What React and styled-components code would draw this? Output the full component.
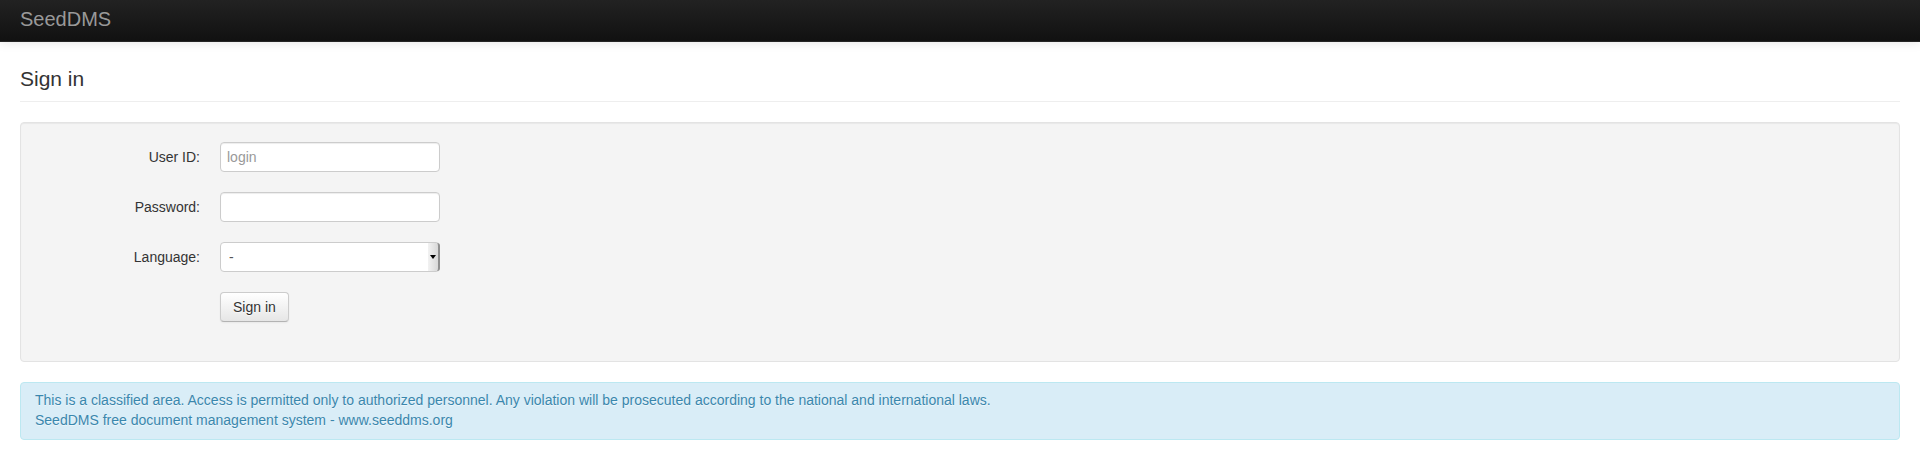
import React from 'react';
import styled, { createGlobalStyle } from 'styled-components';

const GlobalStyle = createGlobalStyle`
  * {
    box-sizing: border-box;
  }

  body {
    margin: 0;
    background: #fff;
    font-family: "Liberation Sans", Arial, Helvetica, sans-serif;
    font-size: 14px;
    line-height: 20px;
    color: #333;
  }
`;

const Navbar = styled.div`
  height: 42px;
  background-image: linear-gradient(to bottom, #222222, #111111);
  border-bottom: 1px solid #252525;
  box-shadow: 0 1px 10px rgba(0, 0, 0, 0.1);
  display: flex;
  align-items: center;
  padding: 0 20px;
`;

const Brand = styled.a`
  color: #999;
  font-size: 20px;
  line-height: 20px;
  text-decoration: none;
  margin-top: -4px;
`;

const Container = styled.div`
  padding: 0 20px;
`;

const PageHeader = styled.div`
  margin: 17px 0 20px;
  padding-bottom: 2px;
  border-bottom: 1px solid #eee;
`;

const Heading = styled.h3`
  margin: 0;
  font-size: 21px;
  font-weight: normal;
  line-height: 40px;
  color: #333;
`;

const Well = styled.div`
  background: #f4f4f4;
  border: 1px solid #e3e3e3;
  border-radius: 4px;
  box-shadow: inset 0 1px 1px rgba(0, 0, 0, 0.05);
  padding: 19px;
  margin-bottom: 20px;
`;

const Form = styled.form`
  display: flex;
  flex-direction: column;
  gap: 20px;
  padding-bottom: 20px;
`;

const ControlGroup = styled.div`
  display: flex;
  align-items: center;
`;

const Label = styled.label`
  width: 160px;
  margin-right: 20px;
  text-align: right;
  color: #333;
`;

const Input = styled.input`
  width: 220px;
  height: 30px;
  padding: 4px 6px;
  font-family: inherit;
  font-size: 14px;
  line-height: 20px;
  color: #555;
  background: #fff;
  border: 1px solid #ccc;
  border-radius: 4px;
  box-shadow: inset 0 1px 1px rgba(0, 0, 0, 0.075);
  outline: none;

  &::placeholder {
    color: #999;
  }
`;

const SelectWrap = styled.div`
  position: relative;
  width: 220px;
  height: 30px;
`;

const Select = styled.select`
  appearance: none;
  width: 100%;
  height: 100%;
  padding: 4px 8px;
  font-family: inherit;
  font-size: 14px;
  color: #555;
  background: #fff;
  border: 1px solid #ccc;
  border-radius: 4px;
  outline: none;
`;

const Arrow = styled.span`
  position: absolute;
  top: 1px;
  right: 0;
  width: 12px;
  height: 28px;
  background-image: linear-gradient(to right, #f2f2f2, #d8d8d8);
  border-right: 2px solid #8f8f8f;
  border-radius: 0 3px 3px 0;
  pointer-events: none;

  &::after {
    content: '';
    position: absolute;
    left: 2px;
    top: 12px;
    border-left: 3.5px solid transparent;
    border-right: 3.5px solid transparent;
    border-top: 4px solid #000;
  }
`;

const Actions = styled.div`
  padding-left: 180px;
`;

const Button = styled.button`
  height: 30px;
  padding: 4px 12px;
  font-family: inherit;
  font-size: 14px;
  line-height: 20px;
  color: #333;
  text-shadow: 0 1px 1px rgba(255, 255, 255, 0.75);
  background-image: linear-gradient(to bottom, #ffffff, #e6e6e6);
  border: 1px solid #ccc;
  border-bottom-color: #b3b3b3;
  border-radius: 4px;
  box-shadow: inset 0 1px 0 rgba(255, 255, 255, 0.2), 0 1px 2px rgba(0, 0, 0, 0.05);
  cursor: pointer;
`;

const Alert = styled.div`
  padding: 7px 35px 9px 14px;
  margin-bottom: 20px;
  color: #3a87ad;
  background: #d9edf7;
  border: 1px solid #bce8f1;
  border-radius: 4px;
  text-shadow: 0 1px 0 rgba(255, 255, 255, 0.5);
`;

const App = () => {
  return (
    <>
      <GlobalStyle />
      <Navbar>
        <Brand href="#">SeedDMS</Brand>
      </Navbar>
      <Container>
        <PageHeader>
          <Heading>Sign in</Heading>
        </PageHeader>
        <Well>
          <Form onSubmit={(e) => e.preventDefault()}>
            <ControlGroup>
              <Label htmlFor="login">User ID:</Label>
              <Input id="login" type="text" placeholder="login" />
            </ControlGroup>
            <ControlGroup>
              <Label htmlFor="pwd">Password:</Label>
              <Input id="pwd" type="password" />
            </ControlGroup>
            <ControlGroup>
              <Label htmlFor="lang">Language:</Label>
              <SelectWrap>
                <Select id="lang" defaultValue="">
                  <option value="">-</option>
                  <option value="en_GB">English (GB)</option>
                  <option value="de_DE">Deutsch</option>
                </Select>
                <Arrow />
              </SelectWrap>
            </ControlGroup>
            <Actions>
              <Button type="submit">Sign in</Button>
            </Actions>
          </Form>
        </Well>
        <Alert>
          This is a classified area. Access is permitted only to authorized personnel. Any violation will be prosecuted according to the national and international laws.
          <br />
          SeedDMS free document management system - www.seeddms.org
        </Alert>
      </Container>
    </>
  );
};

export default App;
